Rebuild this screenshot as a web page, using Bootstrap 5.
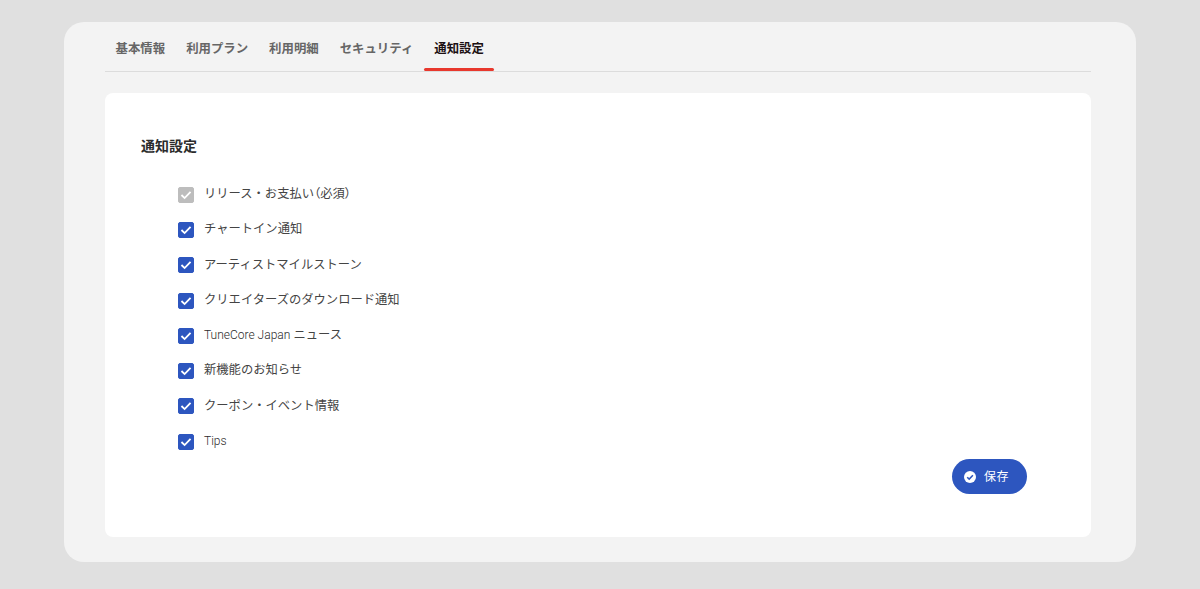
<!DOCTYPE html>
<html lang="ja">
<head>
<meta charset="utf-8">
<title>通知設定</title>
<link href="https://cdn.jsdelivr.net/npm/bootstrap@5.3.0/dist/css/bootstrap.min.css" rel="stylesheet">
<style>
html, body { height: 100%; }
body { background: #e0e0e0; font-family: Roboto, "Noto Sans CJK JP", sans-serif; color: #333; padding: 22px 64px 27px; overflow: hidden; }
.panel-shell { background: #f3f3f3; border-radius: 20px; height: 540px; padding: 0 45px 25px 41px; }
.tab-strip { height: 50px; border-bottom: 1px solid #dcdcdc; gap: 1px; flex-wrap: nowrap; padding-left: .6px; }
.tab-link { display: block; height: 49px; padding: 0 10px; line-height: 53px; font-size: 12.4px; font-weight: 700; color: #666; position: relative; white-space: nowrap; text-decoration: none; }
.tab-link:hover { color: #666; }
.tab-link.is-current, .tab-link.is-current:hover { color: #1c1012; }
.tab-link.is-current::after { content: ""; position: absolute; left: 0; right: -.6px; bottom: 0; height: 3.5px; border-radius: 2px; background: #e8382d; }
.sheet { margin-top: 21px; background: #fff; border-radius: 8px; height: 444px; padding: 36px 36px 0; }
.sheet-title { font-size: 14px; font-weight: 700; line-height: 34px; color: #2b2b2b; margin: 0 0 14px; }
.opt-list { padding-left: 37px; }
.opt-row { display: flex; align-items: center; height: 35.3px; margin: 0; padding: 0; }
.opt-row .form-check-input { width: 16px; height: 16px; margin: 0 10px 0 0; border-radius: 2px; flex: none; background-color: #2d56bf; border-color: #2d56bf; opacity: 1; background-size: 100%; background-image: url("data:image/svg+xml,%3Csvg xmlns='http://www.w3.org/2000/svg' viewBox='0 0 16 16'%3E%3Cpath d='M2.8 8 6.4 11.5 13.2 4.4' fill='none' stroke='%23fff' stroke-width='2.1'/%3E%3C/svg%3E"); }
.opt-row .form-check-input:disabled { background-color: #bdbdbd; border-color: #bdbdbd; opacity: 1; }
.opt-row .form-check-label { font-size: 12.3px; color: #444; opacity: 1 !important; line-height: 18px; position: relative; top: -.7px; }
.narrow-paren { font-feature-settings: "palt"; }
.latin-run { font-size: 12px; font-weight: 300; color: #2b2b2b; }
.action-row { padding-right: 28px; }
.save-btn { width: 75px; height: 35px; border-radius: 18px; background: #2d56bf; border: 0; color: #fff; font-size: 12px; letter-spacing: .4px; padding: 0 0 0 12px; gap: 8px; }
.save-btn:hover { background: #2d56bf; color: #fff; }
</style>
</head>
<body>
<div class="panel-shell">
  <nav class="nav tab-strip">
    <a class="tab-link" href="#">基本情報</a>
    <a class="tab-link" href="#">利用プラン</a>
    <a class="tab-link" href="#">利用明細</a>
    <a class="tab-link" href="#">セキュリティ</a>
    <a class="tab-link is-current" href="#">通知設定</a>
  </nav>
  <div class="sheet">
    <h2 class="sheet-title">通知設定</h2>
    <div class="opt-list">
      <div class="form-check opt-row"><input class="form-check-input" type="checkbox" id="c1" checked disabled><label class="form-check-label" for="c1">リリース・お支払い<span class="narrow-paren">（</span>必須<span class="narrow-paren">）</span></label></div>
      <div class="form-check opt-row"><input class="form-check-input" type="checkbox" id="c2" checked><label class="form-check-label" for="c2">チャートイン通知</label></div>
      <div class="form-check opt-row"><input class="form-check-input" type="checkbox" id="c3" checked><label class="form-check-label" for="c3">アーティストマイルストーン</label></div>
      <div class="form-check opt-row"><input class="form-check-input" type="checkbox" id="c4" checked><label class="form-check-label" for="c4">クリエイターズのダウンロード通知</label></div>
      <div class="form-check opt-row"><input class="form-check-input" type="checkbox" id="c5" checked><label class="form-check-label" for="c5"><span class="latin-run">TuneCore Japan</span> ニュース</label></div>
      <div class="form-check opt-row"><input class="form-check-input" type="checkbox" id="c6" checked><label class="form-check-label" for="c6">新機能のお知らせ</label></div>
      <div class="form-check opt-row"><input class="form-check-input" type="checkbox" id="c7" checked><label class="form-check-label" for="c7">クーポン・イベント情報</label></div>
      <div class="form-check opt-row"><input class="form-check-input" type="checkbox" id="c8" checked><label class="form-check-label" for="c8"><span class="latin-run">Tips</span></label></div>
    </div>
    <div class="d-flex justify-content-end action-row">
      <button type="button" class="btn save-btn d-inline-flex align-items-center justify-content-start">
        <svg width="12" height="12" viewBox="0 0 12 12" aria-hidden="true"><circle cx="6" cy="6" r="6" fill="#fff"/><path d="M3.2 6.2 5.2 8.1 8.9 4.2" fill="none" stroke="#2d56bf" stroke-width="1.5"/></svg>
        <span>保存</span>
      </button>
    </div>
  </div>
</div>
<script src="https://cdn.jsdelivr.net/npm/bootstrap@5.3.0/dist/js/bootstrap.bundle.min.js"></script>
</body>
</html>
